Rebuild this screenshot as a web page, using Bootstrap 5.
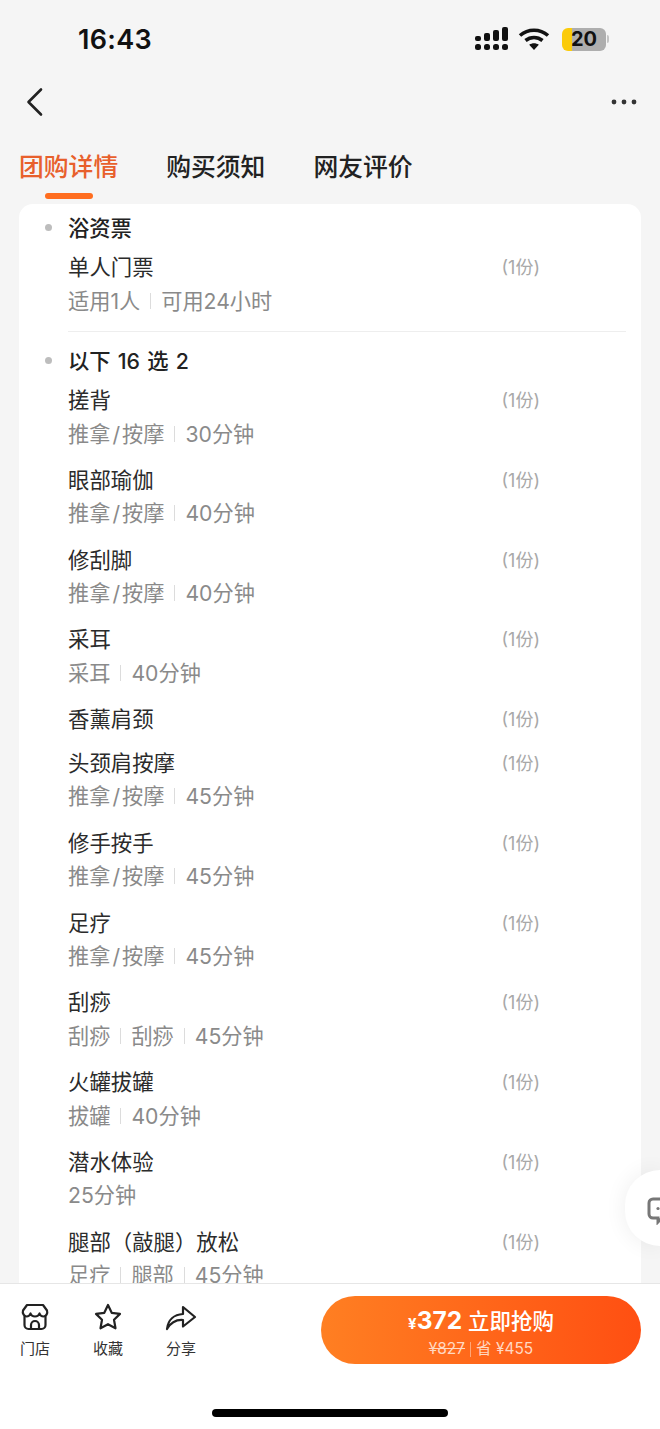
<!DOCTYPE html>
<html lang="zh-CN">
<head>
    <meta charset="UTF-8">
    <meta name="viewport" content="width=device-width, initial-scale=1.0">
    <title>团购详情</title>
    <link rel="stylesheet" href="https://cdn.jsdelivr.net/npm/bootstrap@5.3.0/dist/css/bootstrap.min.css">
    <style>
        html, body { height: 100%; }
        body {
            background: #f5f5f5;
            font-family: "Inter", "Noto Sans CJK SC", sans-serif;
            color: #2b2b2b;
            overflow: hidden;
        }
        .app-shell { height: 1429px; width: 660px; overflow: hidden; }

        /* status bar */
        .status-bar { height: 68px; padding: 10px 51px 0 78px; }
        .status-time { font-size: 27px; font-weight: 600; color: #111; line-height: 60px; letter-spacing: .3px; }
        .status-icons { margin-top: 17px; }
        .battery { width: 44px; height: 23px; border-radius: 6px; background: linear-gradient(90deg, #fbcb0a 0 10px, #aeaeae 10px); font-size: 20px; font-weight: 700; line-height: 23px; text-align: center; color: #111; }
        .battery-nub { width: 2px; height: 8px; background: #c4c4c4; border-radius: 0 2px 2px 0; margin-left: 1px; }

        /* nav */
        .top-nav { height: 68px; padding: 0 23px 0 25px; }

        /* tabs */
        .tab-row { padding-left: 19px; gap: 48px; height: 68px; }
        .tab-link { font-size: 24.8px; font-weight: 500; color: #222; line-height: 63px; height: 63px; position: relative; padding: 0; }
        .tab-link:hover { color: #222; }
        .tab-link.is-active, .tab-link.is-active:hover { color: #e8602c; }
        .tab-link.is-active::after { content: ""; position: absolute; left: 26px; bottom: 0; width: 48px; height: 6px; border-radius: 3px; background: #ff6d1f; }

        /* deal card */
        .deal-clip { min-height: 0; overflow: hidden; padding: 0 19px; }
        .deal-card { background: #fff; border-radius: 14px; padding: 12px 15px 40px 49px; }
        .group-head { font-size: 21.3px; font-weight: 500; line-height: 24px; color: #222; position: relative; word-spacing: 1.5px; }
        .group-head::before { content: ""; position: absolute; left: -23px; top: 8px; width: 7px; height: 7px; border-radius: 50%; background: #bdbdbd; }
        .deal-items { margin: 15px 0 0; }
        .deal-item { position: relative; margin-bottom: 19.8px; padding-right: 120px; }
        .deal-item:last-child { margin-bottom: 0; }
        .item-name { font-size: 21.4px; line-height: 24px; color: #2b2b2b; }
        .item-qty { font-size: 18px; line-height: 24px; color: #a8a8a8; position: absolute; right: 86px; top: 1px; }
        .item-meta { font-size: 21.2px; line-height: 24px; margin-top: 9.5px; padding-bottom: 2.5px; color: #8a8a8a; gap: 10px; }
        .meta-slash { margin: 0 2px; }
        .meta-sep { width: 1px; height: 16px; background: #dcdcdc; }
        .group-rule { border-top: 1px solid #eee; margin: 16px 0 17px; }

        /* floating service button */
        .float-chat { position: absolute; left: 625px; top: 1170px; width: 35px; height: 76px; border-radius: 38px 0 0 38px; background: #fff; box-shadow: 0 0 22px rgba(0,0,0,.07); padding: 27px 0 0 22px; overflow: hidden; }

        /* bottom bar */
        .bottom-bar { background: #fff; border-top: 1px solid #e6e6e6; height: 146px; }
        .action-row { padding: 12px 19px 0 5px; gap: 13px; }
        .action-btn { width: 60px; padding-top: 7px; font-size: 15px; line-height: 18px; color: #333; }
        .action-btn svg { margin-bottom: 9px; }
        .buy-btn { width: 320px; height: 68px; border-radius: 34px; border: 0; background: linear-gradient(90deg, #ff7f22, #ff4f12); color: #fff; padding: 0; }
        .buy-btn:hover, .buy-btn:active { color: #fff; background: linear-gradient(90deg, #ff7f22, #ff4f12); }
        .buy-main { font-size: 21.5px; line-height: 30px; font-weight: 500; padding-top: 3px; }
        .buy-main b { font-size: 24.5px; font-weight: 700; }
        .buy-main i { font-style: normal; font-size: 15px; font-weight: 700; }
        .buy-sub { font-size: 15.5px; line-height: 18px; color: #ffd9c2; gap: 5px; margin-top: 1px; }
        .buy-sep { width: 1px; height: 15px; background: #ffa678; }
        .home-bar { width: 236px; height: 8px; border-radius: 4px; background: #000; margin: 45px auto 0; }
    </style>
</head>
<body>
    <div class="app-shell d-flex flex-column position-relative">

        <!-- Status bar -->
        <div class="status-bar d-flex justify-content-between align-items-start flex-shrink-0">
            <div class="status-time">16:43</div>
            <div class="status-icons d-flex align-items-center">
                <svg width="36" height="24" viewBox="0 0 36 24" fill="#111" class="me-2">
                    <rect x="1" y="9" width="6" height="5" rx="2"/><rect x="10" y="6" width="6" height="8" rx="2"/><rect x="19" y="3" width="6" height="11" rx="2"/><rect x="28" y="0" width="6" height="14" rx="2"/>
                    <rect x="1" y="17" width="6" height="6" rx="2.5"/><rect x="10" y="17" width="6" height="6" rx="2.5"/><rect x="19" y="17" width="6" height="6" rx="2.5"/><rect x="28" y="17" width="6" height="6" rx="2.5"/>
                </svg>
                <svg width="32" height="24" viewBox="0 0 32 24" fill="none" stroke="#111" stroke-width="3.6" class="me-2">
                    <path d="M2 8.5C10 1.5 22 1.5 30 8.5"/><path d="M7.5 13.5C12.5 9.5 19.5 9.5 24.5 13.5"/><path d="M16 23l-4.8-5.2c2.8-2 6.8-2 9.6 0z" fill="#111" stroke="none"/>
                </svg>
                <div class="battery ms-1">20</div>
                <div class="battery-nub"></div>
            </div>
        </div>

        <!-- Nav -->
        <div class="top-nav d-flex justify-content-between align-items-center flex-shrink-0">
            <svg width="20" height="30" viewBox="0 0 20 30" fill="none" stroke="#222" stroke-width="2.6" stroke-linecap="round" stroke-linejoin="round"><path d="M16 2.5L3.5 15L16 27.5"/></svg>
            <svg width="26" height="6" viewBox="0 0 26 6" fill="#333"><circle cx="3" cy="3" r="2.4"/><circle cx="13" cy="3" r="2.4"/><circle cx="23" cy="3" r="2.4"/></svg>
        </div>

        <!-- Tabs -->
        <nav class="nav tab-row flex-shrink-0">
            <a class="nav-link tab-link is-active" href="#">团购详情</a>
            <a class="nav-link tab-link" href="#">购买须知</a>
            <a class="nav-link tab-link" href="#">网友评价</a>
        </nav>

        <!-- Deal contents -->
        <div class="deal-clip flex-grow-1">
            <div class="deal-card">
                <div class="group-head">浴资票</div>
                <ul class="deal-items list-unstyled">
                    <li class="deal-item"><div class="item-name">单人门票</div>
                        <div class="item-meta d-flex align-items-center"><span>适用1人</span><span class="meta-sep"></span><span>可用24小时</span></div></li>
                </ul>
                <div class="group-rule"></div>
                <div class="group-head">以下 16 选 2</div>
                <ul class="deal-items list-unstyled mb-0">
                    <li class="deal-item"><div class="item-name">搓背</div>
                        <div class="item-meta d-flex align-items-center"><span>推拿<span class="meta-slash">/</span>按摩</span><span class="meta-sep"></span><span>30分钟</span></div></li>
                    <li class="deal-item"><div class="item-name">眼部瑜伽</div>
                        <div class="item-meta d-flex align-items-center"><span>推拿<span class="meta-slash">/</span>按摩</span><span class="meta-sep"></span><span>40分钟</span></div></li>
                    <li class="deal-item"><div class="item-name">修刮脚</div>
                        <div class="item-meta d-flex align-items-center"><span>推拿<span class="meta-slash">/</span>按摩</span><span class="meta-sep"></span><span>40分钟</span></div></li>
                    <li class="deal-item"><div class="item-name">采耳</div>
                        <div class="item-meta d-flex align-items-center"><span>采耳</span><span class="meta-sep"></span><span>40分钟</span></div></li>
                    <li class="deal-item"><div class="item-name">香薰肩颈</div></li>
                    <li class="deal-item"><div class="item-name">头颈肩按摩</div>
                        <div class="item-meta d-flex align-items-center"><span>推拿<span class="meta-slash">/</span>按摩</span><span class="meta-sep"></span><span>45分钟</span></div></li>
                    <li class="deal-item"><div class="item-name">修手按手</div>
                        <div class="item-meta d-flex align-items-center"><span>推拿<span class="meta-slash">/</span>按摩</span><span class="meta-sep"></span><span>45分钟</span></div></li>
                    <li class="deal-item"><div class="item-name">足疗</div>
                        <div class="item-meta d-flex align-items-center"><span>推拿<span class="meta-slash">/</span>按摩</span><span class="meta-sep"></span><span>45分钟</span></div></li>
                    <li class="deal-item"><div class="item-name">刮痧</div>
                        <div class="item-meta d-flex align-items-center"><span>刮痧</span><span class="meta-sep"></span><span>刮痧</span><span class="meta-sep"></span><span>45分钟</span></div></li>
                    <li class="deal-item"><div class="item-name">火罐拔罐</div>
                        <div class="item-meta d-flex align-items-center"><span>拔罐</span><span class="meta-sep"></span><span>40分钟</span></div></li>
                    <li class="deal-item"><div class="item-name">潜水体验</div>
                        <div class="item-meta d-flex align-items-center"><span>25分钟</span></div></li>
                    <li class="deal-item"><div class="item-name">腿部（敲腿）放松</div>
                        <div class="item-meta d-flex align-items-center"><span>足疗</span><span class="meta-sep"></span><span>腿部</span><span class="meta-sep"></span><span>45分钟</span></div></li>
                </ul>
            </div>
        </div>

        <!-- Floating service button -->
        <div class="float-chat">
            <svg width="24" height="28" viewBox="0 0 24 28" fill="none" stroke="#777" stroke-width="3"><path d="M6 2h18v19h-9l-4 4v-4H6a4 4 0 0 1-4-4V6a4 4 0 0 1 4-4z"/><circle cx="11" cy="11.5" r="1.6" fill="#777" stroke="none"/></svg>
        </div>

        <!-- Bottom bar -->
        <div class="bottom-bar flex-shrink-0">
            <div class="action-row d-flex align-items-start">
                <div class="action-btn text-center">
                    <svg class="d-block mx-auto" width="30" height="28" viewBox="0 0 30 28" fill="none" stroke="#222" stroke-width="2.2" stroke-linejoin="round" stroke-linecap="round">
                        <path d="M7 2h16l4 5.5c1 3-1 6-3.5 6S20 12 19.5 10.5C19 12 17 13.500 15 13.500S11 12 10.500 10.500C10 12 8.500 13.500 6.500 13.500S2 10.500 3 7.500z"/>
                        <path d="M4.500 13.500V22a4 4 0 0 0 4 4h13a4 4 0 0 0 4-4v-8.500"/>
                        <path d="M11 26v-4a4 4 0 0 1 8 0v4"/>
                    </svg>
                    门店
                </div>
                <div class="action-btn text-center">
                    <svg class="d-block mx-auto" width="30" height="28" viewBox="0 0 30 28" fill="none" stroke="#222" stroke-width="2.2" stroke-linejoin="round">
                        <path d="M15 2l3.700 7.800 8.300 1.100-6 5.900 1.500 8.500L15 21.200 7.500 25.300 9 16.800l-6-5.900 8.300-1.100z"/>
                    </svg>
                    收藏
                </div>
                <div class="action-btn text-center">
                    <svg class="d-block mx-auto" width="32" height="28" viewBox="0 0 32 28" fill="none" stroke="#222" stroke-width="2.2" stroke-linejoin="round" stroke-linecap="round">
                        <path d="M2 26C3 17 9 11.500 18 11V4l12 10-12 9.500V17C11 16.500 5.500 20 2 26z"/>
                    </svg>
                    分享
                </div>
                <button type="button" class="btn buy-btn ms-auto">
                    <div class="buy-main"><i>¥</i><b>372</b> 立即抢购</div>
                    <div class="buy-sub d-flex justify-content-center align-items-center"><s>¥827</s><span class="buy-sep"></span><span>省 ¥455</span></div>
                </button>
            </div>
            <div class="home-bar"></div>
        </div>
    </div>

    <script src="https://cdn.jsdelivr.net/npm/bootstrap@5.3.0/dist/js/bootstrap.bundle.min.js"></script>
    <script>
        // every row carries the same "(1份)" tag on its first line
        document.querySelectorAll(".deal-item").forEach(li => {
            const qty = document.createElement("span");
            qty.className = "item-qty";
            qty.textContent = "(1份)";
            li.appendChild(qty);
        });
    </script>
</body>
</html>
